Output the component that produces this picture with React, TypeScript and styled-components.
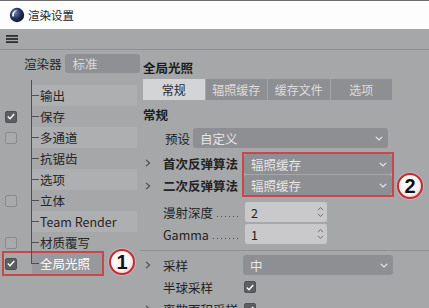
import React from 'react';
import styled, { createGlobalStyle } from 'styled-components';

const GlobalStyle = createGlobalStyle`
  html, body {
    margin: 0;
    padding: 0;
  }
  body {
    background: #a6a7a9;
    font-family: 'Noto Sans CJK SC', 'Noto Sans', sans-serif;
  }
`;

const Window = styled.div`
  position: relative;
  width: 429px;
  height: 308px;
  overflow: hidden;
  background: #a6a7a9;
  color: #262626;
  font-size: 12.5px;
`;

const TitleBar = styled.div`
  height: 28px;
  border-top: 1px solid #6b6b6b;
  background: #fdfdfd;
  display: flex;
  align-items: center;
  gap: 3px;
  padding-left: 9px;
  font-size: 11.5px;
  color: #1f1f1f;
`;

const MenuBar = styled.div`
  height: 20px;
  border-bottom: 1px solid #8d8e90;
  display: flex;
  align-items: center;
  padding-left: 6px;
`;

const Body = styled.div`
  display: grid;
  grid-template-columns: 140px 1fr;
`;

/* left side: renderer + tree */

const LeftPane = styled.div`
  padding-top: 4px;
`;

const RendererRow = styled.div`
  display: flex;
  align-items: center;
  gap: 3px;
  height: 19px;
  padding-left: 24px;
`;

const RendererSelect = styled.div`
  flex: 1;
  height: 19px;
  display: flex;
  align-items: center;
  padding-left: 8px;
  border-radius: 3px;
  background: #8f9093;
  color: #d9d9db;
`;

const Tree = styled.div`
  position: relative;
  margin-top: 7px;
  padding-top: 5px;

  &::before {
    content: '';
    position: absolute;
    left: 31px;
    top: 0;
    bottom: 10px;
    width: 1px;
    background: #505052;
  }
`;

const TreeRow = styled.div<{ $selected?: boolean }>`
  display: grid;
  grid-template-columns: ${({ $selected }) => ($selected ? '28px' : '32px')} 1fr;
  height: 21px;
  margin: 0 3px 0 ${({ $selected }) => ($selected ? '4px' : '0')};
  width: ${({ $selected }) => ($selected ? '98px' : 'auto')};
  outline: ${({ $selected }) => ($selected ? '2px solid #c9464c' : 'none')};
`;

const CheckCell = styled.div`
  display: flex;
  align-items: center;
  justify-content: flex-end;
  padding-right: 15px;
`;

const Branch = styled.div<{ $band?: boolean; $selected?: boolean }>`
  display: flex;
  align-items: center;
  background: ${({ $band, $selected }) =>
    $selected ? '#98999c' : $band ? '#aeafb1' : 'transparent'};
  color: ${({ $selected }) => ($selected ? '#ffffff' : '#262626')};
`;

const Tick = styled.span`
  width: 7px;
  height: 1px;
  background: #505052;
  margin-right: 1px;
`;

const Box = styled.span<{ $checked: boolean }>`
  width: 12px;
  height: 12px;
  box-sizing: border-box;
  border-radius: 2px;
  display: inline-flex;
  align-items: center;
  justify-content: center;
  background: ${({ $checked }) => ($checked ? '#5d5e62' : '#a9aaac')};
  border: 1px solid ${({ $checked }) => ($checked ? '#4f5054' : '#8a8b8e')};
`;

/* right side: global illumination settings */

const RightPane = styled.div`
  display: flex;
  flex-direction: column;
`;

const PaneTitle = styled.div`
  height: 29px;
  box-sizing: border-box;
  padding: 10px 0 0 3px;
  line-height: 16px;
  font-weight: 700;
  color: #1c1c1c;
`;

const TabBar = styled.div`
  display: grid;
  grid-template-columns: repeat(4, 1fr);
  gap: 1px;
  width: 249px;
  height: 21px;
  margin-left: 3px;
`;

const Tab = styled.div<{ $active?: boolean }>`
  display: flex;
  align-items: center;
  justify-content: center;
  font-size: 12px;
  background: ${({ $active }) => ($active ? '#d3d4d6' : '#8e8f92')};
  color: ${({ $active }) => ($active ? '#2a2a2a' : '#dcdcde')};
`;

const SectionTitle = styled.div`
  margin-top: 7px;
  padding-left: 3px;
  line-height: 16px;
  font-weight: 700;
  color: #1c1c1c;
`;

const PropRow = styled.div<{ $top: number; $cols?: string }>`
  display: grid;
  grid-template-columns: ${({ $cols }) => $cols || '23px 80px 150px'};
  align-items: center;
  height: 20px;
  margin-top: ${({ $top }) => $top}px;
`;

const BounceGroup = styled.div`
  display: grid;
  grid-template-columns: 23px 79px 152px;
  grid-template-rows: 1fr 1fr;
  align-items: center;
  margin-top: 4px;
`;

const RedFrame = styled.div`
  grid-column: 3;
  grid-row: 1 / span 2;
  display: grid;
  gap: 1px;
  border: 2px solid #c9464c;
`;

const ChevronCell = styled.div`
  display: flex;
  align-items: center;
  padding-left: 5px;
`;

const Label = styled.div<{ $bold?: boolean }>`
  display: flex;
  align-items: center;
  white-space: nowrap;
  font-weight: ${({ $bold }) => ($bold ? 700 : 400)};
  color: #232323;
`;

const Leader = styled.span`
  flex: 1;
  align-self: center;
  height: 1px;
  margin: 8px 2px 0 4px;
  background-image: linear-gradient(to right, #4a4a4a 1px, transparent 1px);
  background-size: 4px 1px;
`;

const DropSelect = styled.div`
  height: 20px;
  display: flex;
  align-items: center;
  justify-content: space-between;
  padding: 0 5px 0 7px;
  border-radius: 3px;
  background: #8e8f92;
  color: #e6e6e8;
`;

const NumberField = styled.div`
  width: 82px;
  height: 20px;
  box-sizing: border-box;
  margin-left: 2px;
  display: flex;
  align-items: center;
  justify-content: space-between;
  padding: 0 3px 0 6px;
  border-radius: 2px;
  background: #c9c9cb;
  color: #222;
`;

const CheckHolder = styled.div`
  display: flex;
  align-items: center;
  padding-left: 1px;
`;

const Divider = styled.div`
  height: 1px;
  margin-top: 6px;
  background: #8f9092;
`;

const Callout = styled.div<{ $x: number; $y: number }>`
  position: absolute;
  left: ${({ $x }) => $x}px;
  top: ${({ $y }) => $y}px;
  width: 26px;
  height: 26px;
  box-sizing: border-box;
  border-radius: 50%;
  border: 2px solid #b8313a;
  box-shadow: 0 0 0 1px rgba(240, 170, 175, 0.7);
  background: radial-gradient(circle at 42% 38%, #ffffff 0%, #fdf2f3 55%, #eab7bb 100%);
  display: flex;
  align-items: center;
  justify-content: center;
  font-family: 'Liberation Sans', Arial, sans-serif;
  font-size: 20px;
  font-weight: 700;
  color: #111;
`;

const Logo = () => (
  <svg width="16" height="16" viewBox="0 0 16 16">
    <defs>
      <radialGradient id="c4dSphere" cx="0.38" cy="0.35" r="0.7">
        <stop offset="0" stopColor="#6f80b4" />
        <stop offset="0.55" stopColor="#26305a" />
        <stop offset="1" stopColor="#0f1328" />
      </radialGradient>
    </defs>
    <circle cx="8" cy="8" r="7.2" fill="url(#c4dSphere)" />
    <path d="M3.2 9.5 C2.6 6 5 3 8.6 3.1 C6.2 4 4.6 6.3 4.9 9.6 Z" fill="#f4f6fb" />
  </svg>
);

const Hamburger = () => (
  <svg width="12" height="8" viewBox="0 0 12 8">
    <rect x="0" y="0" width="12" height="1.8" fill="#2e2e30" />
    <rect x="0" y="3.1" width="12" height="1.8" fill="#2e2e30" />
    <rect x="0" y="6.2" width="12" height="1.8" fill="#2e2e30" />
  </svg>
);

const Chevron = () => (
  <svg width="6" height="8" viewBox="0 0 6 8">
    <path d="M1 0.8 L4.6 4 L1 7.2" fill="none" stroke="#4a4a4c" strokeWidth="1.1" />
  </svg>
);

const DownArrow = () => (
  <svg width="8" height="5" viewBox="0 0 8 5">
    <path d="M0.8 0.8 L4 4 L7.2 0.8" fill="none" stroke="#e8e8ea" strokeWidth="1.2" />
  </svg>
);

const Spinner = () => (
  <svg width="7" height="12" viewBox="0 0 7 12">
    <path d="M1 4.2 L3.5 1.5 L6 4.2" fill="none" stroke="#727274" strokeWidth="1" />
    <path d="M1 7.8 L3.5 10.5 L6 7.8" fill="none" stroke="#727274" strokeWidth="1" />
  </svg>
);

const CheckBox = ({ checked }: { checked: boolean }) => (
  <Box $checked={checked}>
    {checked && (
      <svg width="8" height="7" viewBox="0 0 8 7">
        <path d="M0.8 3.6 L3 5.7 L7.2 1" fill="none" stroke="#ffffff" strokeWidth="1.4" />
      </svg>
    )}
  </Box>
);

const treeItems: { label: string; check: boolean | null; selected?: boolean }[] = [
  { label: '输出', check: null },
  { label: '保存', check: true },
  { label: '多通道', check: false },
  { label: '抗锯齿', check: null },
  { label: '选项', check: null },
  { label: '立体', check: false },
  { label: 'Team Render', check: null },
  { label: '材质覆写', check: false },
  { label: '全局光照', check: true, selected: true },
];

const tabs = ['常规', '辐照缓存', '缓存文件', '选项'];

const App = () => (
  <>
    <GlobalStyle />
    <Window>
      <TitleBar>
        <Logo />
        <span>渲染设置</span>
      </TitleBar>
      <MenuBar>
        <Hamburger />
      </MenuBar>
      <Body>
        <LeftPane>
          <RendererRow>
            <span>渲染器</span>
            <RendererSelect>标准</RendererSelect>
          </RendererRow>
          <Tree>
            {treeItems.map((item, i) => (
              <TreeRow key={item.label} $selected={item.selected}>
                <CheckCell>{item.check !== null && <CheckBox checked={item.check} />}</CheckCell>
                <Branch $band={i % 2 === 0} $selected={item.selected}>
                  <Tick />
                  <span>{item.label}</span>
                </Branch>
              </TreeRow>
            ))}
          </Tree>
        </LeftPane>

        <RightPane>
          <PaneTitle>全局光照</PaneTitle>
          <TabBar>
            {tabs.map((t, i) => (
              <Tab key={t} $active={i === 0}>
                {t}
              </Tab>
            ))}
          </TabBar>
          <SectionTitle>常规</SectionTitle>

          <PropRow $top={5} $cols="25px 28px 195px">
            <span />
            <Label>预设</Label>
            <DropSelect>
              <span>自定义</span>
              <DownArrow />
            </DropSelect>
          </PropRow>

          <BounceGroup>
            <ChevronCell>
              <Chevron />
            </ChevronCell>
            <Label $bold>首次反弹算法</Label>
            <ChevronCell style={{ gridRow: 2 }}>
              <Chevron />
            </ChevronCell>
            <Label $bold style={{ gridRow: 2 }}>
              二次反弹算法
            </Label>
            <RedFrame>
              <DropSelect>
                <span>辐照缓存</span>
                <DownArrow />
              </DropSelect>
              <DropSelect>
                <span>辐照缓存</span>
                <DownArrow />
              </DropSelect>
            </RedFrame>
          </BounceGroup>

          <PropRow $top={5}>
            <span />
            <Label>
              漫射深度
              <Leader />
            </Label>
            <NumberField>
              <span>2</span>
              <Spinner />
            </NumberField>
          </PropRow>
          <PropRow $top={2}>
            <span />
            <Label>
              Gamma
              <Leader />
            </Label>
            <NumberField>
              <span>1</span>
              <Spinner />
            </NumberField>
          </PropRow>

          <Divider />

          <PropRow $top={4}>
            <ChevronCell>
              <Chevron />
            </ChevronCell>
            <Label>采样</Label>
            <DropSelect>
              <span>中</span>
              <DownArrow />
            </DropSelect>
          </PropRow>
          <PropRow $top={2}>
            <span />
            <Label>半球采样</Label>
            <CheckHolder>
              <CheckBox checked />
            </CheckHolder>
          </PropRow>
          <PropRow $top={2}>
            <ChevronCell>
              <Chevron />
            </ChevronCell>
            <Label>离散面积采样</Label>
            <CheckHolder>
              <CheckBox checked />
            </CheckHolder>
          </PropRow>
        </RightPane>
      </Body>

      <Callout $x={109} $y={249}>1</Callout>
      <Callout $x={397} $y={173}>2</Callout>
    </Window>
  </>
);

export default App;
